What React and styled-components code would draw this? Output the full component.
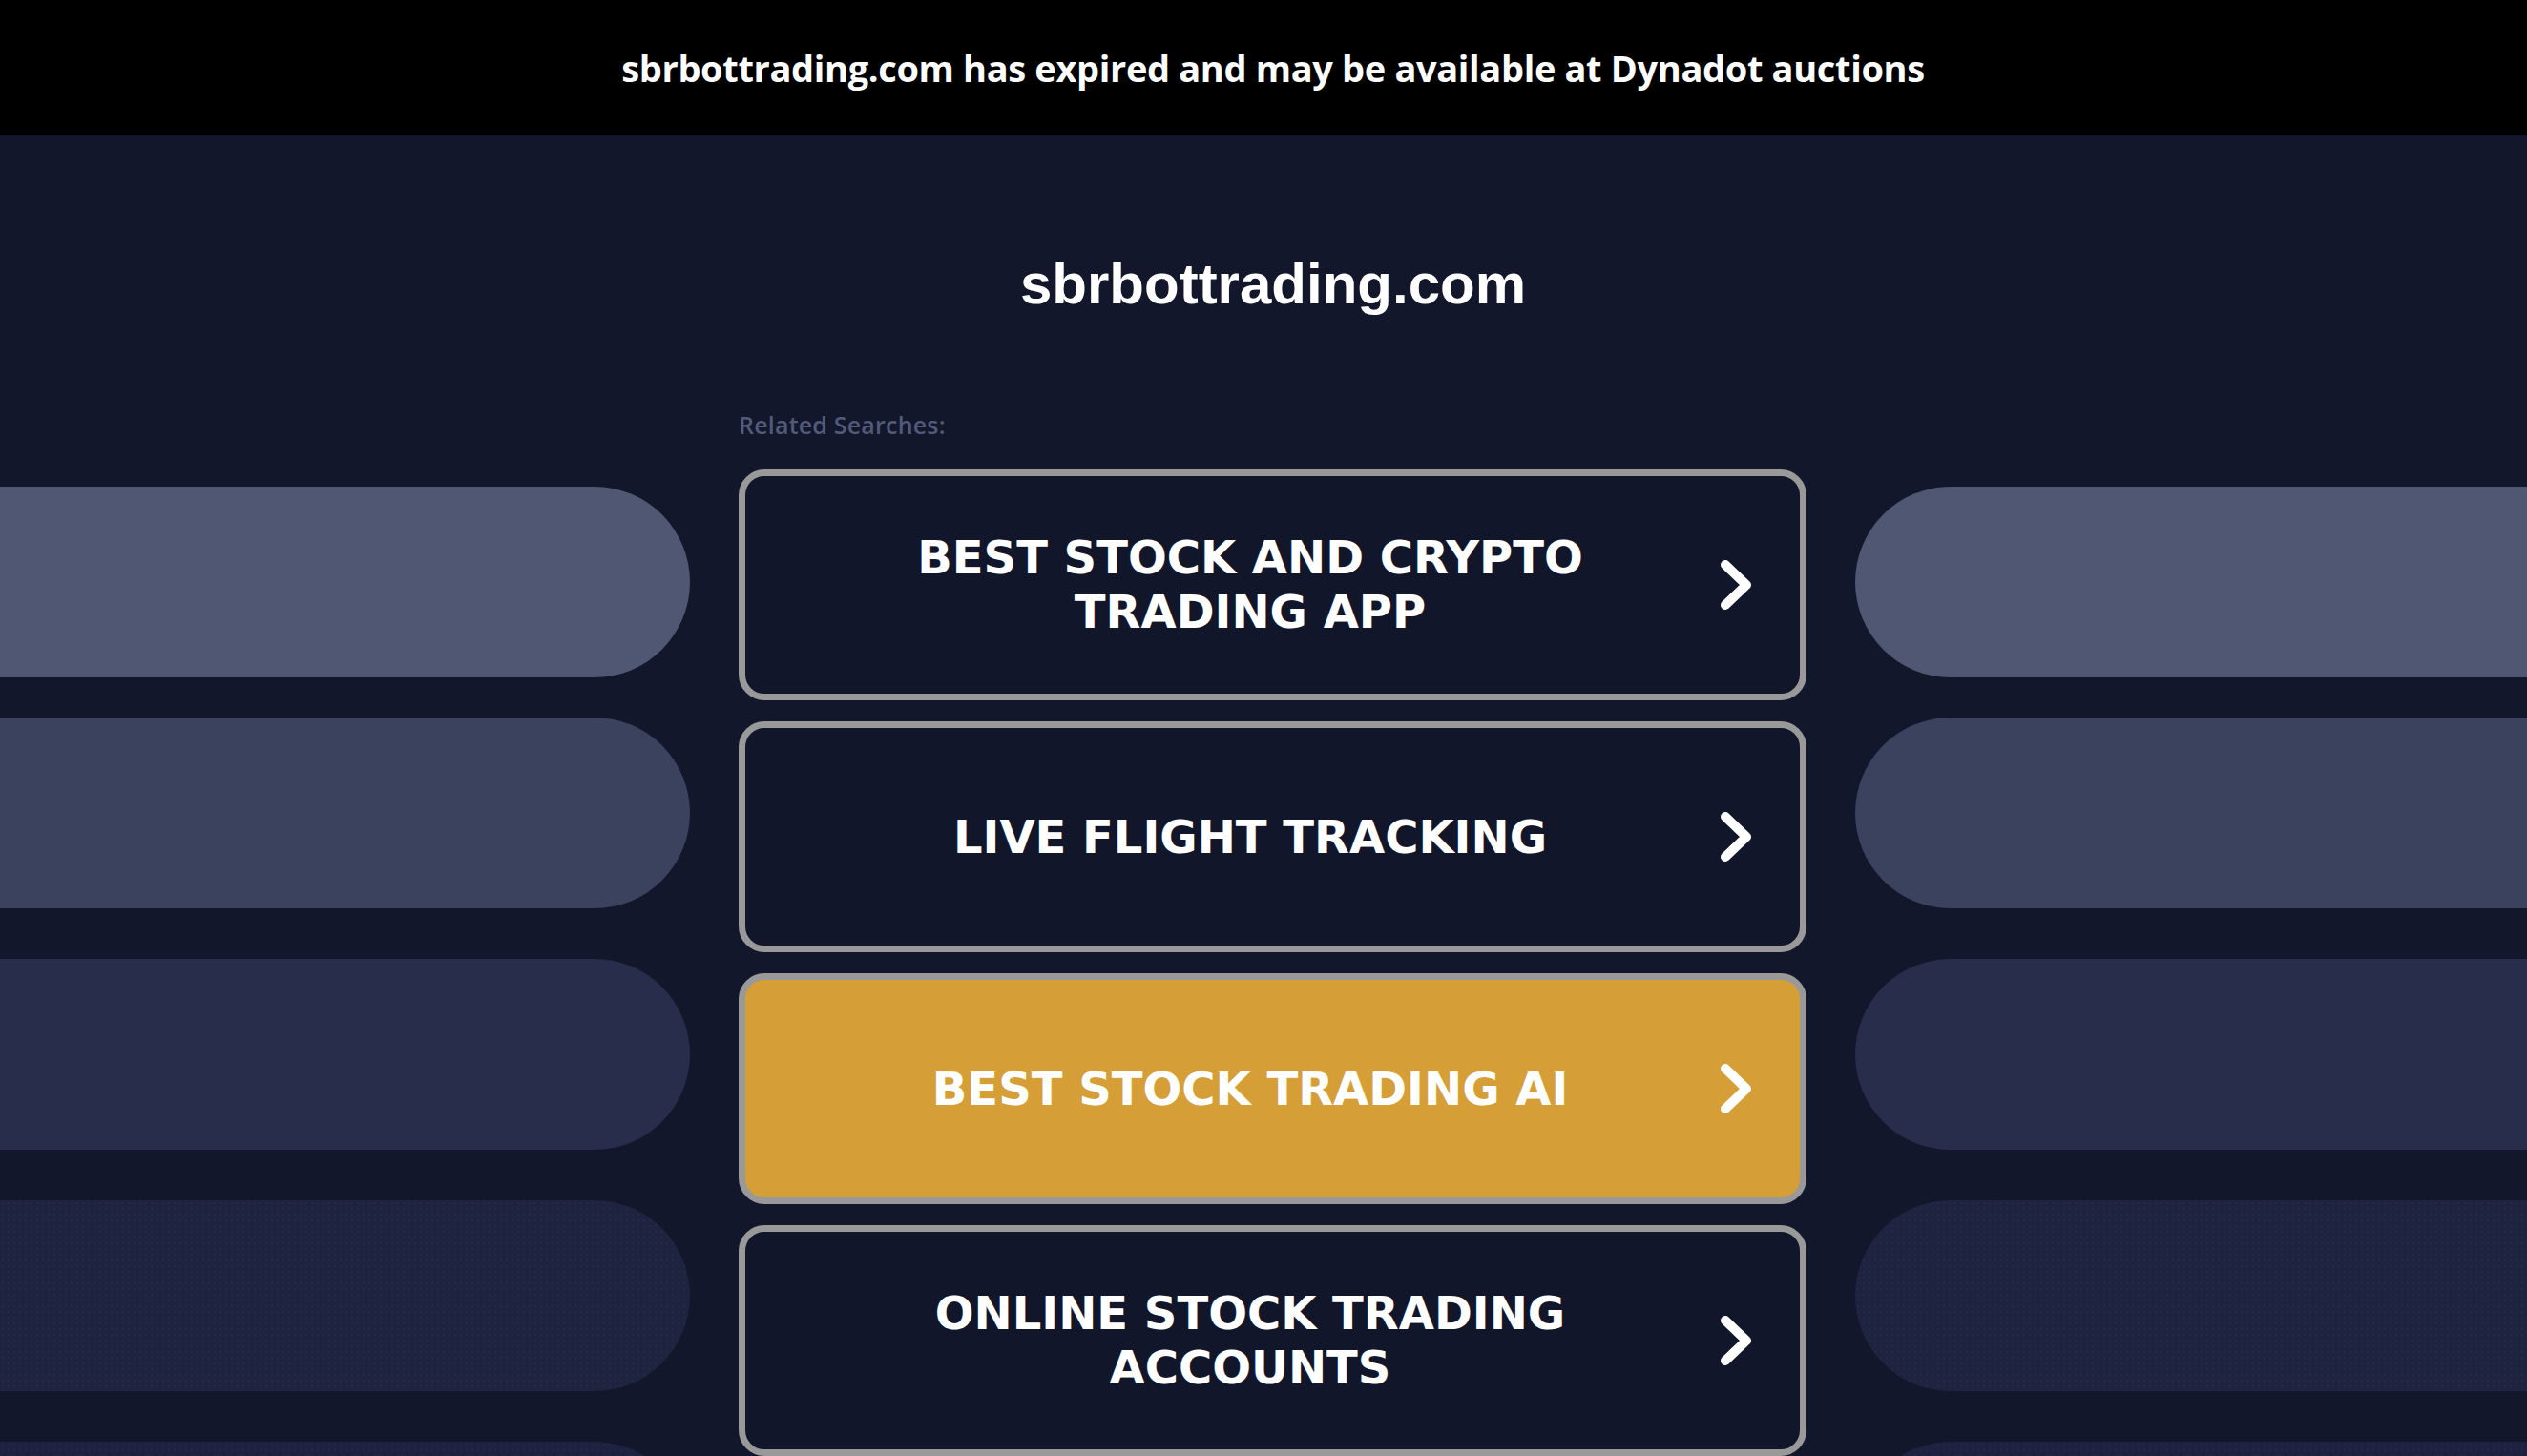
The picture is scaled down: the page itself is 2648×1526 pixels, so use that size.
import styled, { createGlobalStyle } from 'styled-components';

const GlobalStyle = createGlobalStyle`
	html, body {
		margin: 0;
		padding: 0;
		background: #12172b;
		overflow: hidden;
	}
	* {
		box-sizing: border-box;
	}
`;

const searches = [
	{ label: 'Best Stock and Crypto Trading App' },
	{ label: 'Live Flight Tracking' },
	{ label: 'Best Stock Trading AI', active: true },
	{ label: 'Online Stock Trading Accounts' },
];

const pills = ['#4f5773', '#3b425e', '#272d4a', '#1e2440', '#1c2240'];

const Chevron = () => (
	<svg width="42" height="62" viewBox="0 0 42 62">
		<polyline
			points="10,10 32,31 10,52"
			fill="none"
			stroke="#fff"
			strokeWidth="10"
			strokeLinecap="round"
			strokeLinejoin="round"
		/>
	</svg>
);

const App = () => {
	return (
		<Page>
			<GlobalStyle />
			<TopBar>sbrbottrading.com has expired and may be available at Dynadot auctions</TopBar>
			<Title>sbrbottrading.com</Title>
			<Layout>
				<PillColumn>
					{pills.map((color, i) => (
						<Pill key={i} $color={color} $side="left" $dotted={i > 2} />
					))}
				</PillColumn>
				<Searches>
					<Related>Related Searches:</Related>
					{searches.map(item => (
						<SearchButton key={item.label} $active={item.active}>
							<ButtonText>{item.label}</ButtonText>
							<Chevron />
						</SearchButton>
					))}
				</Searches>
				<PillColumn>
					{pills.map((color, i) => (
						<Pill key={i} $color={color} $side="right" $dotted={i > 2} />
					))}
				</PillColumn>
			</Layout>
		</Page>
	);
};

export default App;

const Page = styled.div`
	width: 2648px;
	height: 1526px;
	overflow: hidden;
	background: #12172b;
`;

const TopBar = styled.div`
	height: 142px;
	background: #000;
	color: #fff;
	display: flex;
	align-items: center;
	justify-content: center;
	padding-left: 20px;
	font-family: 'Open Sans', 'Noto Sans', sans-serif;
	font-weight: 700;
	font-size: 38px;
	letter-spacing: -0.35px;
`;

const Title = styled.h1`
	margin: 0;
	padding: 120px 0 0 20px;
	text-align: center;
	color: #fff;
	font-family: 'Liberation Sans', Arial, sans-serif;
	font-weight: 700;
	font-size: 60px;
	line-height: 72px;
`;

const Layout = styled.div`
	display: grid;
	grid-template-columns: 723px 1119px 1fr;
	column-gap: 51px;
`;

const PillColumn = styled.div`
	display: flex;
	flex-direction: column;
	padding-top: 176px;
	gap: 53px;
`;

const Pill = styled.div`
	height: 200px;
	flex-shrink: 0;
	background-color: ${p => p.$color};
	background-image: ${p =>
		p.$dotted
			? 'radial-gradient(rgba(120, 130, 170, 0.06) 1px, transparent 1.6px)'
			: 'none'};
	background-size: 6px 6px;
	border-radius: ${p => (p.$side === 'left' ? '0 100px 100px 0' : '100px 0 0 100px')};

	&:first-child {
		margin-bottom: -11px;
	}
`;

const Searches = styled.div`
	display: flex;
	flex-direction: column;
	gap: 22px;
	padding-top: 96px;
`;

const Related = styled.div`
	font-family: 'Open Sans', 'Noto Sans', sans-serif;
	font-weight: 600;
	font-size: 25px;
	line-height: 30px;
	letter-spacing: 0.2px;
	color: #525a79;
	margin-bottom: 10px;
`;

const SearchButton = styled.a`
	height: 242px;
	flex-shrink: 0;
	display: grid;
	grid-template-columns: 1fr 42px;
	align-items: center;
	column-gap: 40px;
	padding: 0 46px 0 81px;
	border: 7px solid #999;
	border-radius: 27px;
	background: ${p => (p.$active ? '#d69e37' : '#12162b')};
	color: #fff;
	text-decoration: none;
	cursor: pointer;
`;

const ButtonText = styled.span`
	justify-self: center;
	max-width: 820px;
	text-align: center;
	text-transform: uppercase;
	font-family: 'DejaVu Sans', Verdana, sans-serif;
	font-weight: 700;
	font-size: 48px;
	line-height: 57px;
`;
